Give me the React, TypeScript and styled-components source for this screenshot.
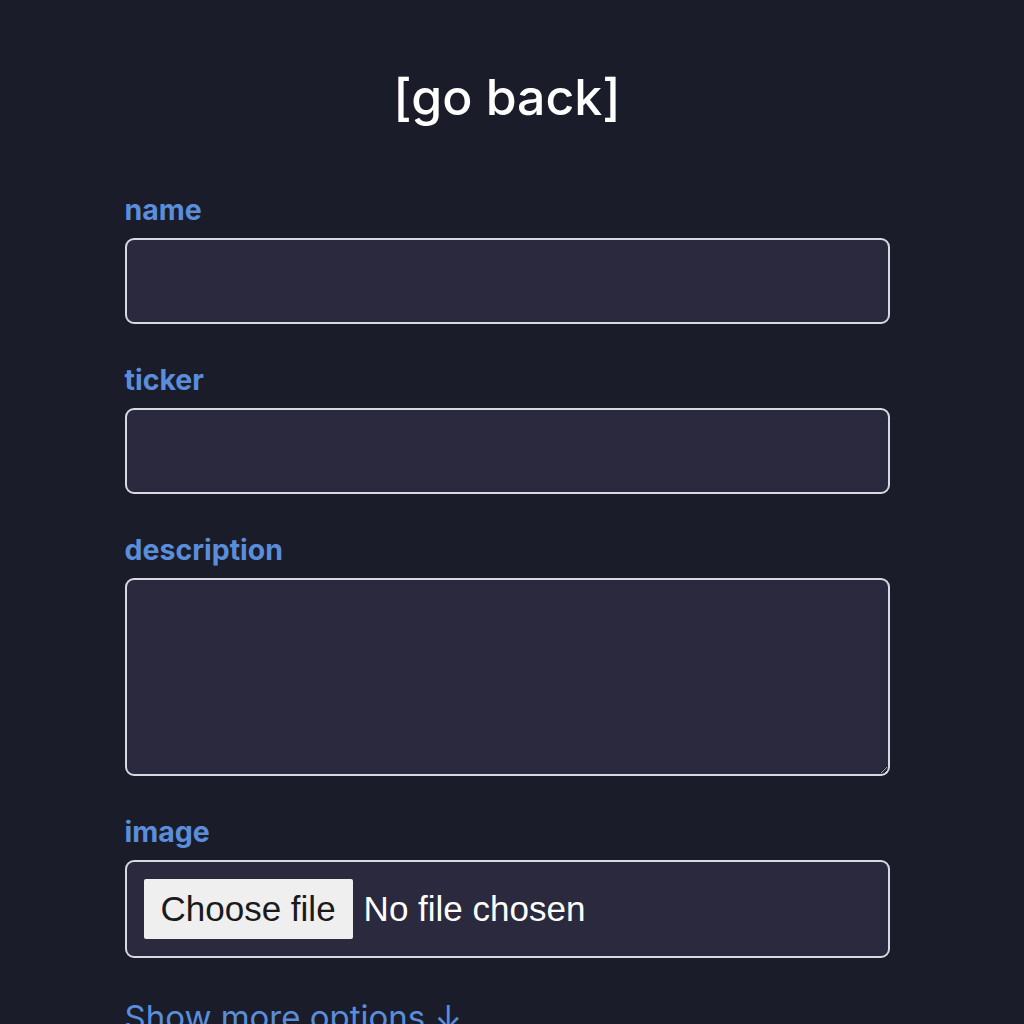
import styled, { createGlobalStyle } from 'styled-components';

const Global = createGlobalStyle`
  html, body {
    margin: 0;
    padding: 0;
    background: #1b1c29;
  }
  body {
    font-family: Inter, "Noto Sans", sans-serif;
    color: #ffffff;
  }
`;

const Page = styled.div`
  min-height: 1024px;
  padding: 0 10px 0 0;
  box-sizing: border-box;
  overflow: hidden;
`;

const Column = styled.div`
  width: 765px;
  margin: 0 auto;
  display: flex;
  flex-direction: column;
`;

const BackLink = styled.a`
  align-self: center;
  margin-top: 67px;
  margin-bottom: 66px;
  font-size: 50px;
  line-height: 60px;
  color: #ffffff;
  text-decoration: none;
  font-weight: 500;
`;

const Field = styled.div<{ $last?: boolean }>`
  display: flex;
  flex-direction: column;
  gap: 11px;
  margin-bottom: ${(p) => (p.$last ? '39px' : '39px')};
`;

const Label = styled.label`
  font-size: 28.5px;
  line-height: 34px;
  font-weight: 700;
  color: #5a8edb;
`;

const TextInput = styled.input`
  box-sizing: border-box;
  height: 86px;
  width: 100%;
  background: #2b293d;
  border: 2px solid #d8d8e0;
  border-radius: 9px;
  color: #fff;
  font-size: 28px;
  padding: 0 16px;
  outline: none;
`;

const TextArea = styled.textarea`
  box-sizing: border-box;
  height: 198px;
  width: 100%;
  background: #2b293d;
  border: 2px solid #d8d8e0;
  border-radius: 9px;
  color: #fff;
  font-size: 28px;
  padding: 16px;
  outline: none;
  resize: vertical;
  display: block;
`;

const FileBox = styled.label`
  box-sizing: border-box;
  height: 98px;
  display: flex;
  align-items: center;
  gap: 11px;
  padding: 0 17px;
  background: #2b293d;
  border: 2px solid #d8d8e0;
  border-radius: 9px;
  font-family: "Liberation Sans", Arial, sans-serif;
  font-size: 35px;
  cursor: pointer;

  input {
    display: none;
  }
`;

const FileButton = styled.span`
  background: #efefef;
  color: #1a1a1a;
  height: 60px;
  display: flex;
  align-items: center;
  padding: 0 17px;
  border-radius: 2px;
`;

const FileStatus = styled.span`
  color: #ffffff;
`;

const MoreOptions = styled.button`
  align-self: flex-start;
  background: none;
  border: none;
  padding: 0;
  font-family: Inter, "Noto Sans", sans-serif;
  font-size: 33px;
  line-height: 40px;
  color: #5a8edb;
  cursor: pointer;
`;

export default function App() {
  return (
    <Page>
      <Global />
      <Column>
        <BackLink href="#">[go back]</BackLink>
        <Field>
          <Label htmlFor="name">name</Label>
          <TextInput id="name" type="text" />
        </Field>
        <Field>
          <Label htmlFor="ticker">ticker</Label>
          <TextInput id="ticker" type="text" />
        </Field>
        <Field>
          <Label htmlFor="description">description</Label>
          <TextArea id="description" />
        </Field>
        <Field $last>
          <Label>image</Label>
          <FileBox>
            <input type="file" />
            <FileButton>Choose file</FileButton>
            <FileStatus>No file chosen</FileStatus>
          </FileBox>
        </Field>
        <MoreOptions>Show more options ↓</MoreOptions>
      </Column>
    </Page>
  );
}
